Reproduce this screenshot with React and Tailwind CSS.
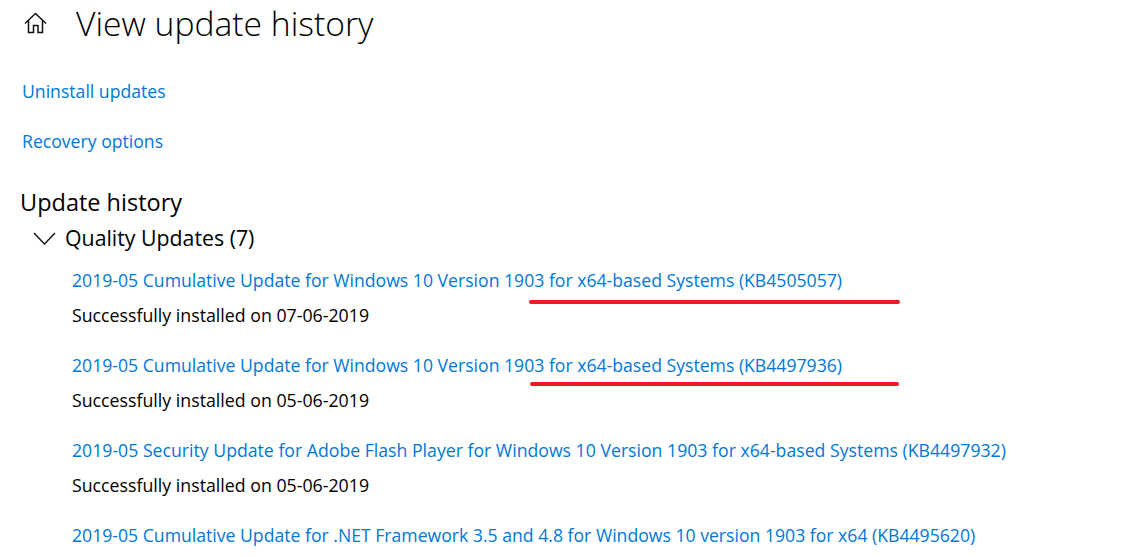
import React from "react";

function Update({ title, status, mark, size = "text-[17.64px]" }) {
  return (
    <div className="relative mb-[17px]">
      <div className={"h-[34px] leading-[34px] text-[#0078d7] whitespace-nowrap " + size}>{title}</div>
      {status && <div className="h-[34px] leading-[36px] text-[17.76px] text-black whitespace-nowrap">{status}</div>}
      {mark}
    </div>
  );
}

export default function App() {
  return (
    <div className="w-[1125px] h-[557px] overflow-hidden bg-white font-['Open_Sans','Noto_Sans',sans-serif]">
      <div className="flex items-center h-[46px] pl-[24px]">
        <svg width="23" height="22" viewBox="0 0 23 22" fill="none" stroke="#111" strokeWidth="1.5">
          <path d="M1 11.5 L11.5 1.5 L22 11.5" />
          <path d="M4.5 8.5 V20.5 H9.5 V13.5 H14 V20.5 H18.5 V8.5" />
        </svg>
        <div className="ml-[29px] text-[33.66px] font-light text-black leading-[46px] whitespace-nowrap">View update history</div>
      </div>
      <div className="pl-[22px] mt-[20px] text-[17.64px] text-[#0078d7] leading-[50px]">
        <div>Uninstall updates</div>
        <div>Recovery options</div>
      </div>
      <div className="pl-[20px] mt-[18px] text-[23.5px] leading-[36px] text-black">Update history</div>
      <div className="flex items-center pl-[33px] h-[36px] text-[21.3px] text-black">
        <svg width="23" height="13" viewBox="0 0 23 13" fill="none" stroke="#111" strokeWidth="1.4"><path d="M1 1 L11.5 12 L22 1" /></svg>
        <span className="ml-[9px]">Quality Updates (7)</span>
      </div>
      <div className="pl-[72px] mt-[7px]">
        <Update title="2019-05 Cumulative Update for Windows 10 Version 1903 for x64-based Systems (KB4505057)" status="Successfully installed on 07-06-2019"
          mark={<div className="absolute left-[457px] top-[37px] w-[371px] h-[4px] rounded-full bg-[#ed1c24]" />} />
        <Update title="2019-05 Cumulative Update for Windows 10 Version 1903 for x64-based Systems (KB4497936)" status="Successfully installed on 05-06-2019"
          mark={<div className="absolute left-[458px] top-[34px] w-[369px] h-[4px] rounded-full bg-[#ed1c24]" />} />
        <Update size="text-[17.68px]" title="2019-05 Security Update for Adobe Flash Player for Windows 10 Version 1903 for x64-based Systems (KB4497932)" status="Successfully installed on 05-06-2019" />
        <Update title="2019-05 Cumulative Update for .NET Framework 3.5 and 4.8 for Windows 10 version 1903 for x64 (KB4495620)" />
      </div>
    </div>
  );
}
